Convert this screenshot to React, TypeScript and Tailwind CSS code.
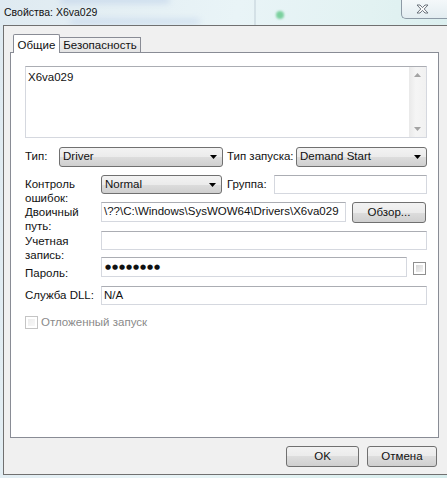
import type { FC, ReactNode } from 'react';

const font = "font-['Liberation_Sans',Arial,sans-serif]";

const Combo: FC<{ value: string; className: string }> = ({ value, className }) => (
  <div
    className={`flex items-center justify-between rounded-[3px] border border-[#707070] bg-[linear-gradient(#f3f3f3,#ebebeb_50%,#dddddd_50%,#cfcfcf)] pl-[3px] pr-[5px] ${className}`}
  >
    <span className="pt-[1px]">{value}</span>
    <svg width="7" height="4" viewBox="0 0 7 4">
      <path d="M0 0h7L3.5 4z" fill="#000" />
    </svg>
  </div>
);

const TextBox: FC<{ className: string; children?: ReactNode }> = ({ className, children }) => (
  <div
    className={`flex items-center border border-[#d5d8df] border-t-[#abadb3] bg-white pl-[2px] ${className}`}
  >
    {children}
  </div>
);

const Button: FC<{ label: string; className: string }> = ({ label, className }) => (
  <div
    className={`flex items-center justify-center rounded-[3px] border border-[#707070] bg-[linear-gradient(#f2f2f2,#ebebeb_50%,#dddddd_50%,#cfcfcf)] ${className}`}
  >
    {label}
  </div>
);

const App: FC = () => {
  return (
    <div
      className={`relative h-[478px] w-[447px] overflow-hidden bg-[linear-gradient(100deg,#dfeaf1,#e9f4f7_45%,#e2f2f2_70%,#d6ecec)] text-[11.5px] text-[#111] ${font}`}
    >
      {/* blurred stuff behind the glass */}
      <div className="absolute left-[60px] top-[-3px] h-[6px] w-[110px] rounded-full bg-[#9fb8e0] opacity-40 blur-[3px]" />
      <div className="absolute left-[70px] top-[19px] h-[5px] w-[130px] rounded-full bg-[#a8bfe4] opacity-40 blur-[3px]" />
      <div className="absolute left-[254px] top-0 h-[25px] w-[2px] bg-[#c6d3dc] opacity-60" />
      <div className="absolute left-[276px] top-[11px] h-[8px] w-[8px] rounded-full bg-[#4fc27a] opacity-70 blur-[1px]" />

      <div className="relative flex h-[25px] items-start">
        <div className="pl-[4px] pt-[5px] text-[10.5px] text-[#111]">Свойства: X6va029</div>
        <div className="ml-auto flex h-[19px] w-[46px] items-center justify-center rounded-bl-[5px] border-b border-l border-[#8d9aa6] bg-[linear-gradient(#f4f8fa,#e3edf1)] pr-[4px]">
          <svg width="13" height="10" viewBox="0 0 13 10">
            <path
              d="M1 1h3l2.5 2.6L9 1h3L8.2 5 12 9H9L6.5 6.4 4 9H1l3.8-4z"
              fill="#fbfbfb"
              stroke="#5e6670"
              strokeWidth="0.9"
            />
          </svg>
        </div>
      </div>

      <div className="relative ml-[3px] flex h-[450px] w-[460px] flex-col border-b border-l border-t border-[#707070] bg-[#f0f0f0]">
        <div className="ml-[9px] mt-[8px] flex h-[19px] items-end">
          <div className="relative z-10 flex h-[19px] w-[47px] justify-center rounded-t-[2px] border-l border-r border-t border-[#898c95] bg-white pt-[2px]">
            Общие
          </div>
          <div className="mb-[1px] flex h-[15px] w-[81px] justify-center border-r border-t border-[#898c95] bg-[linear-gradient(#f3f3f3,#e4e4e4)] pt-[1px] leading-[13px]">
            Безопасность
          </div>
        </div>

        <div className="ml-[6px] -mt-[1px] h-[386px] w-[429px] border border-[#898c95] bg-white pl-[14px] pt-[13px]">
          <div className="flex h-[72px] w-[402px] border border-[#d5d8df] border-t-[#abadb3] bg-white">
            <div className="flex-1 pl-[2px] pt-[2px]">X6va029</div>
            <div className="flex w-[17px] flex-col items-center justify-between bg-[linear-gradient(90deg,#e9e9e9,#f5f5f5_40%,#f1f1f1)] py-[6px]">
              <svg width="7" height="4" viewBox="0 0 7 4">
                <path d="M0 4h7L3.5 0z" fill="#a3a3a3" />
              </svg>
              <svg width="7" height="4" viewBox="0 0 7 4">
                <path d="M0 0h7L3.5 4z" fill="#a3a3a3" />
              </svg>
            </div>
          </div>

          <div className="mt-[8px] flex h-[21px] items-center">
            <div className="w-[34px]">Тип:</div>
            <Combo value="Driver" className="h-[20px] w-[164px]" />
            <div className="ml-[4px] w-[69px]">Тип запуска:</div>
            <Combo value="Demand Start" className="h-[20px] w-[131px]" />
          </div>

          <div className="mt-[8px] flex h-[27px] items-start">
            <div className="mt-[2px] w-[76px] leading-[14px]">
              Контроль
              <br />
              ошибок:
            </div>
            <Combo value="Normal" className="h-[19px] w-[121px]" />
            <div className="ml-[5px] flex h-[19px] w-[47px] items-center">Группа:</div>
            <TextBox className="h-[19px] w-[153px]" />
          </div>

          <div className="flex h-[29px] items-start">
            <div className="mt-[3px] w-[76px] leading-[14px]">
              Двоичный
              <br />
              путь:
            </div>
            <TextBox className="h-[20px] w-[245px]">{'\\??\\C:\\Windows\\SysWOW64\\Drivers\\X6va029'}</TextBox>
            <Button label="Обзор..." className="ml-[6px] h-[21px] w-[74px]" />
          </div>

          <div className="flex h-[26px] items-start">
            <div className="mt-[3px] w-[76px] leading-[14px]">
              Учетная
              <br />
              запись:
            </div>
            <TextBox className="h-[19px] w-[326px]" />
          </div>

          <div className="flex h-[29px] items-start">
            <div className="mt-[9px] w-[76px] leading-[14px]">Пароль:</div>
            <TextBox className="h-[20px] w-[306px] pl-[3px]">
              <span className="font-['DejaVu_Sans',sans-serif] text-[7px] tracking-[0.9px]">●●●●●●●●</span>
            </TextBox>
            <div className="ml-[6px] mt-[5px] h-[13px] w-[13px] border border-[#8f8f8f] p-[2px]">
              <div className="h-full w-full bg-[linear-gradient(135deg,#d6d6d6,#f4f4f4)]" />
            </div>
          </div>

          <div className="flex h-[28px] items-start">
            <div className="flex h-[19px] w-[76px] items-center">Служба DLL:</div>
            <TextBox className="h-[19px] w-[326px]">N/A</TextBox>
          </div>

          <div className="flex items-center text-[#8a8a8a]">
            <div className="h-[13px] w-[13px] border border-[#c4c4c4] p-[2px]">
              <div className="h-full w-full bg-[linear-gradient(135deg,#ececec,#f8f8f8)]" />
            </div>
            <span className="ml-[3px]">Отложенный запуск</span>
          </div>
        </div>

        <div className="ml-[282px] mt-[8px] flex">
          <Button label="OK" className="h-[21px] w-[73px]" />
          <Button label="Отмена" className="ml-[8px] h-[21px] w-[70px]" />
        </div>
      </div>
    </div>
  );
};

export default App;
